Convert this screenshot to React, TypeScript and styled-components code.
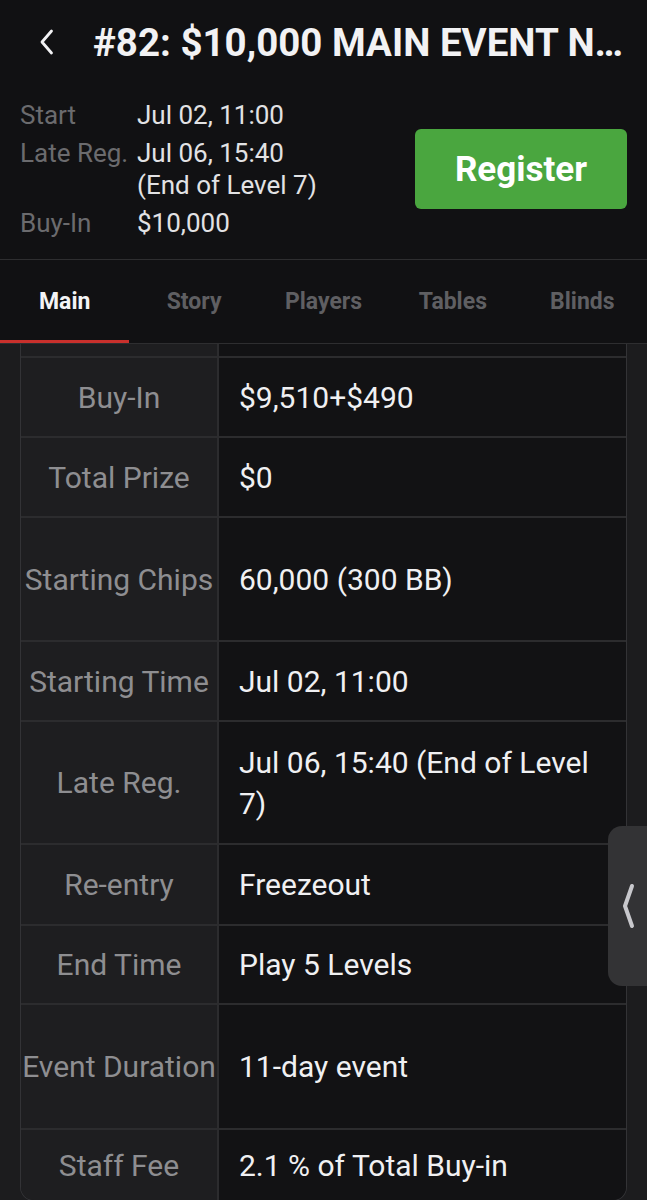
import React from "react";
import styled, { createGlobalStyle } from "styled-components";

const Global = createGlobalStyle`
  html, body { margin: 0; padding: 0; background: #1c1c1e; }
  body { font-family: Roboto, "Noto Sans", sans-serif; -webkit-font-smoothing: antialiased; }
  * { box-sizing: border-box; }
`;

const Page = styled.div`
  width: 647px;
  height: 1200px;
  overflow: hidden;
  background: #1c1c1e;
  position: relative;
`;

const Header = styled.header`
  background: #111113;
  border-bottom: 1px solid #2e2e30;
`;

const TitleBar = styled.div`
  height: 84px;
  display: flex;
  align-items: center;
  padding: 0 0 0 34px;
  gap: 33px;
`;

const BackButton = styled.button`
  width: 26px;
  height: 30px;
  padding: 0;
  border: none;
  background: none;
  display: flex;
  align-items: center;
  justify-content: center;
  flex: none;
`;

const Title = styled.h1`
  margin: 0;
  font-size: 38.5px;
  font-weight: 700;
  color: #f2f2f4;
  white-space: nowrap;
  overflow: hidden;
  text-overflow: ellipsis;
  min-width: 0;
  padding-right: 4px;
`;

const Summary = styled.div`
  display: flex;
  align-items: center;
  justify-content: space-between;
  padding: 15px 20px 20px 20px;
`;

const InfoGrid = styled.div`
  display: grid;
  grid-template-columns: 117px auto;
  row-gap: 6px;
  font-size: 26px;
  line-height: 32px;
`;

const InfoLabel = styled.span`
  color: #6b6b6e;
  white-space: nowrap;
`;

const InfoValue = styled.span`
  color: #e2e2e4;
  white-space: nowrap;
`;

const RegisterButton = styled.button`
  width: 212px;
  height: 80px;
  margin-top: 0px;
  background: #4aa63f;
  color: #fff;
  border: none;
  border-radius: 6px;
  font-family: Roboto, sans-serif;
  font-size: 35px;
  font-weight: 700;
`;

const Tabs = styled.nav`
  display: grid;
  grid-template-columns: repeat(5, 1fr);
  background: #111113;
  border-bottom: 1px solid #2e2e30;
  height: 84px;
`;

const Tab = styled.div<{ $active?: boolean }>`
  display: flex;
  align-items: center;
  justify-content: center;
  font-size: 23px;
  font-weight: 700;
  color: ${(p) => (p.$active ? "#f4f4f6" : "#5f5f62")};
  border-bottom: 3px solid ${(p) => (p.$active ? "#c9302c" : "transparent")};
  padding-top: 3px;
`;

const Content = styled.div`
  padding: 0 20px;
`;

const Table = styled.div`
  border: 1px solid #333336;
  border-top: none;
  border-radius: 0 0 14px 14px;
  overflow: hidden;
`;

const Row = styled.div<{ $h: number }>`
  display: grid;
  grid-template-columns: 198px 1fr;
  height: ${(p) => p.$h}px;
  border-bottom: 2px solid #2c2c2e;
  &:last-child { border-bottom: none; }
`;

const LabelCell = styled.div`
  background: #1e1e20;
  border-right: 2px solid #2c2c2e;
  display: flex;
  align-items: center;
  justify-content: center;
  text-align: center;
  color: #8e8e91;
  font-size: 30px;
  white-space: nowrap;
`;

const ValueCell = styled.div`
  background: #121214;
  display: flex;
  align-items: center;
  padding: 0 20px;
  color: #f0f0f2;
  font-size: 30px;
  line-height: 41px;
`;

const SideHandle = styled.div`
  position: absolute;
  right: 0;
  top: 826px;
  width: 39px;
  height: 160px;
  background: #333335;
  border-radius: 14px 0 0 14px;
  display: flex;
  align-items: center;
  justify-content: center;
`;

const rows: { label: string; value: string; h: number }[] = [
  { label: "", value: "", h: 14 },
  { label: "Buy-In", value: "$9,510+$490", h: 80 },
  { label: "Total Prize", value: "$0", h: 80 },
  { label: "Starting Chips", value: "60,000 (300 BB)", h: 124 },
  { label: "Starting Time", value: "Jul 02, 11:00", h: 80 },
  { label: "Late Reg.", value: "Jul 06, 15:40 (End of Level 7)", h: 123 },
  { label: "Re-entry", value: "Freezeout", h: 81 },
  { label: "End Time", value: "Play 5 Levels", h: 79 },
  { label: "Event Duration", value: "11-day event", h: 125 },
  { label: "Staff Fee", value: "2.1 % of Total Buy-in", h: 70 },
];

export default function App() {
  return (
    <Page>
      <Global />
      <Header>
        <TitleBar>
          <BackButton aria-label="Back">
            <svg width="18" height="28" viewBox="0 0 18 28" fill="none">
              <path d="M13.5 3 L4 14 L13.5 25" stroke="#f2f2f4" strokeWidth="2.8" strokeLinecap="round" strokeLinejoin="round" />
            </svg>
          </BackButton>
          <Title>#82: $10,000 MAIN EVENT NO-LIMIT HOLD'EM WORLD CHAMPIONSHIP</Title>
        </TitleBar>
        <Summary>
          <InfoGrid>
            <InfoLabel>Start</InfoLabel>
            <InfoValue>Jul 02, 11:00</InfoValue>
            <InfoLabel>Late Reg.</InfoLabel>
            <InfoValue>
              Jul 06, 15:40
              <br />
              (End of Level 7)
            </InfoValue>
            <InfoLabel>Buy-In</InfoLabel>
            <InfoValue>$10,000</InfoValue>
          </InfoGrid>
          <RegisterButton>Register</RegisterButton>
        </Summary>
      </Header>
      <Tabs>
        <Tab $active>Main</Tab>
        <Tab>Story</Tab>
        <Tab>Players</Tab>
        <Tab>Tables</Tab>
        <Tab>Blinds</Tab>
      </Tabs>
      <Content>
        <Table>
          {rows.map((r, i) => (
            <Row key={i} $h={r.h}>
              <LabelCell>{r.label}</LabelCell>
              <ValueCell>{r.value}</ValueCell>
            </Row>
          ))}
        </Table>
      </Content>
      <SideHandle>
        <svg width="16" height="48" viewBox="0 0 16 48" fill="none">
          <path d="M12 4 L5 24 L12 44" stroke="#c8c8cc" strokeWidth="4" strokeLinecap="round" strokeLinejoin="round" />
        </svg>
      </SideHandle>
    </Page>
  );
}
